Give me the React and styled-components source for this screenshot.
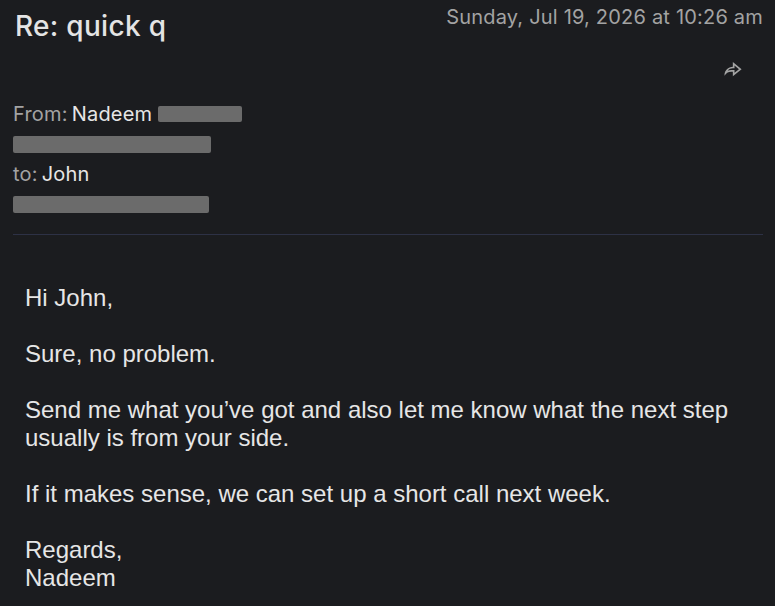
import React from 'react';
import styled, { createGlobalStyle } from 'styled-components';

const GlobalStyle = createGlobalStyle`
  html, body {
    margin: 0;
    padding: 0;
    background: #1b1c1f;
  }
  body {
    font-family: Inter, "Noto Sans", sans-serif;
  }
`;

const Page = styled.div`
  background: #1b1c1f;
  min-height: 606px;
  padding: 0 12px 0 13px;
  box-sizing: border-box;
`;

const Header = styled.header`
  display: flex;
  justify-content: space-between;
  align-items: flex-start;
`;

const Subject = styled.h1`
  margin: 7px 0 0 2px;
  color: #e4e4e4;
  font-size: 28px;
  font-weight: 500;
  line-height: 38px;
  letter-spacing: 0.3px;
`;

const Side = styled.div`
  display: flex;
  flex-direction: column;
  align-items: flex-end;
`;

const Stamp = styled.div`
  margin-top: 4px;
  color: #a3a3a3;
  font-size: 20px;
  line-height: 26px;
  letter-spacing: 0.2px;
`;

const IconButton = styled.button`
  display: flex;
  align-items: center;
  justify-content: center;
  width: 32px;
  height: 32px;
  margin: 24px 15px 0 0;
  padding: 0;
  border: 0;
  background: transparent;
  color: #a3a3a3;
  cursor: pointer;
`;

const Meta = styled.div`
  display: flex;
  flex-direction: column;
  margin-top: 13px;
  padding-bottom: 15px;
  border-bottom: 1px solid #2d3145;
`;

const MetaRow = styled.div`
  display: flex;
  align-items: center;
  gap: 6px;
  height: 30px;
  font-size: 20px;
  letter-spacing: 0.2px;
`;

const Label = styled.span`
  color: #a3a3a3;
  margin-right: -2px;
`;

const Name = styled.span`
  color: #e6e6e6;
`;

const Redacted = styled.span`
  display: inline-block;
  width: ${(p) => p.w}px;
  height: ${(p) => p.h || 16}px;
  background: #6b6b6b;
  border-radius: 2px;
`;

const Body = styled.div`
  padding: 49px 12px 0 12px;
  color: #e6e6e6;
  font-family: "Liberation Sans", Arial, sans-serif;
  font-size: 24px;
  line-height: 28px;
`;

const Para = styled.p`
  margin: 0 0 28px 0;
`;

function ForwardIcon() {
  return (
    <svg width="20" height="20" viewBox="0 0 24 24" fill="currentColor">
      <path d="M13 14H11C7.54202 14 4.53953 15.9502 3.03239 18.8107C3.01093 18.5433 3 18.2729 3 18C3 12.4772 7.47715 8 13 8V2.5L23.5 11L13 19.5V14ZM11 12H15V15.3078L20.3214 11L15 6.69224V10H13C10.5795 10 8.41011 11.0749 6.94312 12.7735C8.20873 12.2714 9.58041 12 11 12Z" />
    </svg>
  );
}

export default function App() {
  return (
    <Page>
      <GlobalStyle />
      <Header>
        <Subject>Re: quick q</Subject>
        <Side>
          <Stamp>Sunday, Jul 19, 2026 at 10:26 am</Stamp>
          <IconButton aria-label="Forward">
            <ForwardIcon />
          </IconButton>
        </Side>
      </Header>
      <Meta>
        <MetaRow>
          <Label>From:</Label>
          <Name>Nadeem</Name>
          <Redacted w={84} />
        </MetaRow>
        <MetaRow>
          <Redacted w={198} h={17} />
        </MetaRow>
        <MetaRow>
          <Label>to:</Label>
          <Name>John</Name>
        </MetaRow>
        <MetaRow>
          <Redacted w={196} h={17} />
        </MetaRow>
      </Meta>
      <Body>
        <Para>Hi John,</Para>
        <Para>Sure, no problem.</Para>
        <Para>Send me what you’ve got and also let me know what the next step usually is from your side.</Para>
        <Para>If it makes sense, we can set up a short call next week.</Para>
        <Para>Regards,<br />Nadeem</Para>
      </Body>
    </Page>
  );
}
